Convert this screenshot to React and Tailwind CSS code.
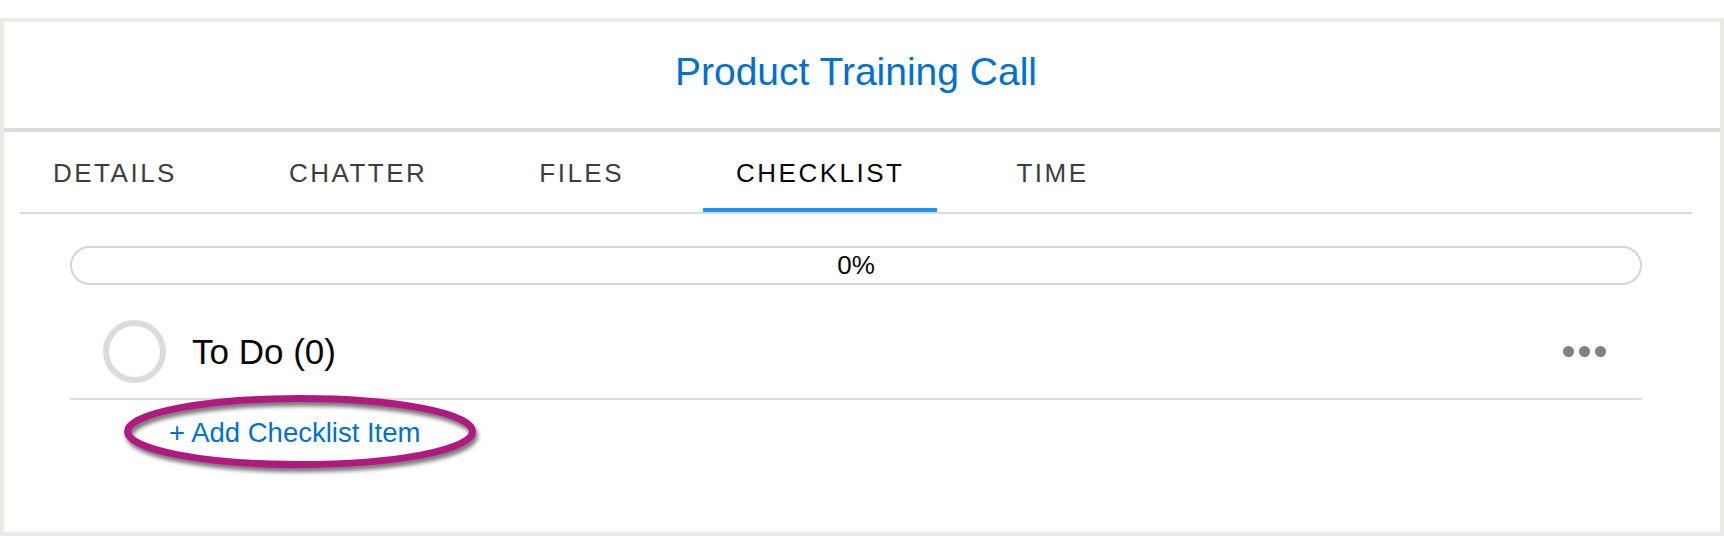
const tabs = ["DETAILS", "CHATTER", "FILES", "CHECKLIST", "TIME"];

const App = () => {
  return (
    <div
      className="w-full h-[558px] pt-[18px] bg-white"
      style={{ fontFamily: '"Liberation Sans", Arial, sans-serif' }}
    >
      <div className="h-[518px] border-4 border-[#ebebe6] flex flex-col">

        {/* Title */}
        <div className="h-[110px] pt-[31px] pr-[12px] text-center border-b-4 border-[#dddbda]">
          <h1 className="text-[39px] leading-[38px] text-[#0070d2]">
            Product Training Call
          </h1>
        </div>

        {/* Tabs */}
        <div className="flex gap-[46px] ml-[16px] mr-[28px] border-b-2 border-[#dddbda]">
          {tabs.map((tab) => (
            <div
              key={tab}
              className={
                tab === "CHECKLIST"
                  ? "h-[80px] px-[33px] pt-[28px] text-[26px] leading-[26px] tracking-[2.5px] text-[#080707] border-b-4 border-[#1b96ff]"
                  : "h-[80px] px-[33px] pt-[28px] text-[26px] leading-[26px] tracking-[2.5px] text-[#3e3e3c]"
              }
            >
              {tab}
            </div>
          ))}
        </div>

        {/* Checklist */}
        <div className="ml-[66px] mr-[78px]">
          <div className="mt-[32px] h-[39px] rounded-full border-2 border-[#d4d4d4] flex items-center justify-center text-[26px] text-[#080707]">
            0%
          </div>

          <div className="mt-[35px] pb-[15px] flex items-center border-b-2 border-[#e0dcdc]">
            <div className="ml-[33px] w-[63px] h-[63px] rounded-full border-[6px] border-[#dddbda]" />
            <span className="ml-[26px] text-[35px] leading-[34px] text-[#080707]">
              To Do (0)
            </span>
            <div className="ml-auto mr-[36px] flex gap-[5px]">
              <span className="w-[11px] h-[11px] rounded-full bg-[#808080]" />
              <span className="w-[11px] h-[11px] rounded-full bg-[#808080]" />
              <span className="w-[11px] h-[11px] rounded-full bg-[#808080]" />
            </div>
          </div>

          <div className="mt-[19px] ml-[99px] relative w-fit">
            <span className="text-[27.5px] leading-[27px] text-[#0070d2]">
              + Add Checklist Item
            </span>

            {/* annotation ring */}
            <svg
              className="absolute left-[-50px] top-[-29px] overflow-visible pointer-events-none"
              width="362"
              height="83"
              style={{ filter: "drop-shadow(2px 4px 2px rgba(0,0,0,0.55))" }}
            >
              <ellipse
                cx="181"
                cy="41.5"
                rx="172.5"
                ry="33"
                fill="none"
                stroke="#b01a80"
                strokeWidth="7"
              />
            </svg>
          </div>
        </div>

      </div>
    </div>
  );
};

export default App;
